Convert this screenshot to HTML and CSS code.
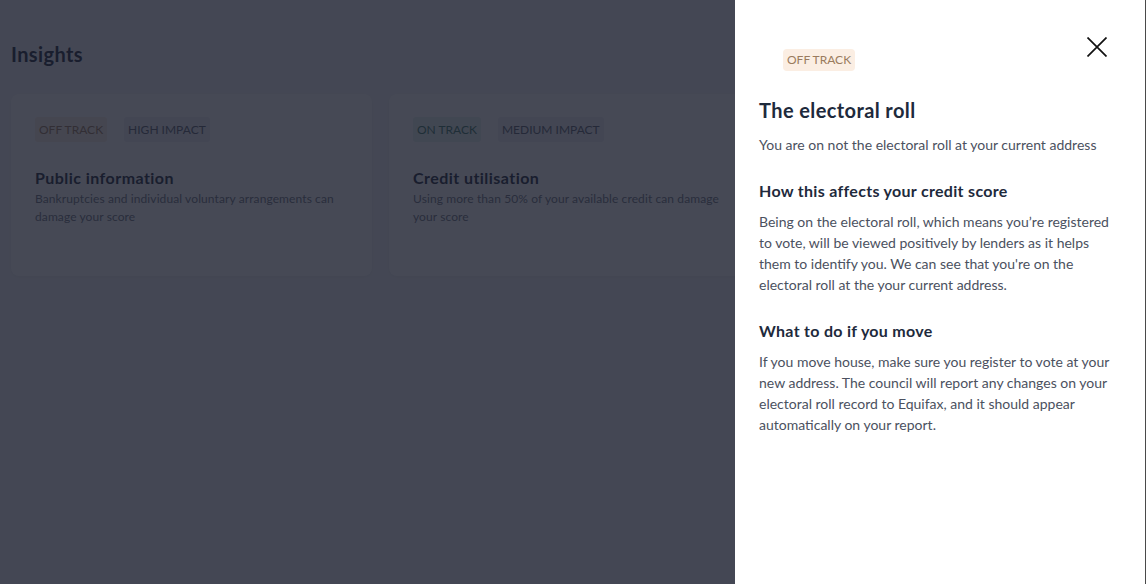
FILE: index.html
```html
<!DOCTYPE html>
<html lang="en">
<head>
<meta charset="utf-8">
<title>Insights</title>
<link rel="stylesheet" href="styles.css">
</head>
<body>
<main class="page">
  <h1 class="page-title">Insights</h1>
  <section class="cards">
    <article class="card">
      <div class="badges">
        <span class="badge badge-off">OFF TRACK</span>
        <span class="badge badge-impact">HIGH IMPACT</span>
      </div>
      <h2 class="card-title">Public information</h2>
      <p class="card-text">Bankruptcies and individual voluntary arrangements can damage your score</p>
    </article>
    <article class="card">
      <div class="badges">
        <span class="badge badge-on">ON TRACK</span>
        <span class="badge badge-impact">MEDIUM IMPACT</span>
      </div>
      <h2 class="card-title">Credit utilisation</h2>
      <p class="card-text">Using more than 50% of your available credit can damage your score</p>
    </article>
  </section>
</main>
<div class="overlay"></div>
<aside class="panel">
  <button class="close" aria-label="Close">
    <svg width="20" height="20" viewBox="0 0 20 20"><path d="M0.5 0.5 L19.5 19.5 M19.5 0.5 L0.5 19.5" stroke="#111" stroke-width="1.7" fill="none"/></svg>
  </button>
  <span class="badge badge-off panel-badge">OFF TRACK</span>
  <h2 class="panel-title">The electoral roll</h2>
  <p class="panel-sub">You are on not the electoral roll at your current address</p>
  <h3 class="panel-h3">How this affects your credit score</h3>
  <p class="panel-text">Being on the electoral roll, which means you’re registered to vote, will be viewed positively by lenders as it helps them to identify you. We can see that you're on the electoral roll at the your current address.</p>
  <h3 class="panel-h3">What to do if you move</h3>
  <p class="panel-text">If you move house, make sure you register to vote at your new address. The council will report any changes on your electoral roll record to Equifax, and it should appear automatically on your report.</p>
</aside>
</body>
</html>
```

FILE: styles.css
```css
* { box-sizing: border-box; }
html, body { margin: 0; height: 100%; }
body {
  font-family: Lato, "Noto Sans", "Liberation Sans", sans-serif;
  background: #f5f6f8;
  color: #1e2a3c;
  overflow: hidden;
}
.page { padding: 40px 11px; }
.page-title {
  margin: 0;
  font-size: 20px;
  line-height: 28px;
  font-weight: 700;
  letter-spacing: 0.4px;
  color: #1e2a3c;
}
.cards {
  margin-top: 26px;
  display: grid;
  grid-template-columns: repeat(3, 361px);
  gap: 17px;
}
.card {
  background: #fff;
  border-radius: 8px;
  height: 182px;
  padding: 23px 24px;
  box-shadow: 0 1px 3px rgba(30, 42, 60, 0.06);
}
.badges { display: flex; gap: 17px; }
.badge {
  display: inline-block;
  font-size: 12px;
  line-height: 25px;
  padding: 0 4px;
  border-radius: 3px;
}
.badge-off { background: #fbeee3; color: #9a7b5e; }
.badge-on { background: #e4f2ee; color: #3f7a6a; }
.badge-impact { background: #eef0f4; color: #5b6270; }
.card-title {
  margin: 26px 0 0;
  font-size: 16px;
  line-height: 20px;
  font-weight: 700;
  letter-spacing: 0.45px;
}
.card-text {
  margin: 2px 0 0;
  font-size: 12px;
  line-height: 18px;
  letter-spacing: 0.1px;
  color: #6f7582;
}
.overlay {
  position: fixed;
  inset: 0;
  background: rgba(24, 28, 42, 0.8);
}
.panel {
  position: fixed;
  top: 0;
  right: 0;
  bottom: 0;
  width: 411px;
  background: #fff;
  border-right: 1px solid #4a4a4a;
  padding: 49px 24px 0;
  display: flex;
  flex-direction: column;
  align-items: flex-start;
}
.close {
  position: absolute;
  top: 37px;
  right: 38px;
  padding: 0;
  border: 0;
  background: none;
  line-height: 0;
  cursor: pointer;
}
.panel-badge {
  margin-left: 24px;
  line-height: 22px;
  border-radius: 4px;
}
.panel-title {
  margin: 25px 0 0;
  font-size: 20px;
  line-height: 28px;
  font-weight: 700;
  letter-spacing: 0.4px;
  color: #1e2a3c;
}
.panel-sub {
  margin: 10px 0 0;
  font-size: 14px;
  line-height: 21px;
  color: #4b5160;
}
.panel-h3 {
  margin: 26px 0 0;
  font-size: 16px;
  line-height: 20px;
  font-weight: 700;
  letter-spacing: 0.3px;
  color: #1e2a3c;
}
.panel-h3 + .panel-text { margin-top: 10px; }
.panel-text {
  margin: 0;
  font-size: 14px;
  line-height: 21px;
  color: #4b5160;
}
```
